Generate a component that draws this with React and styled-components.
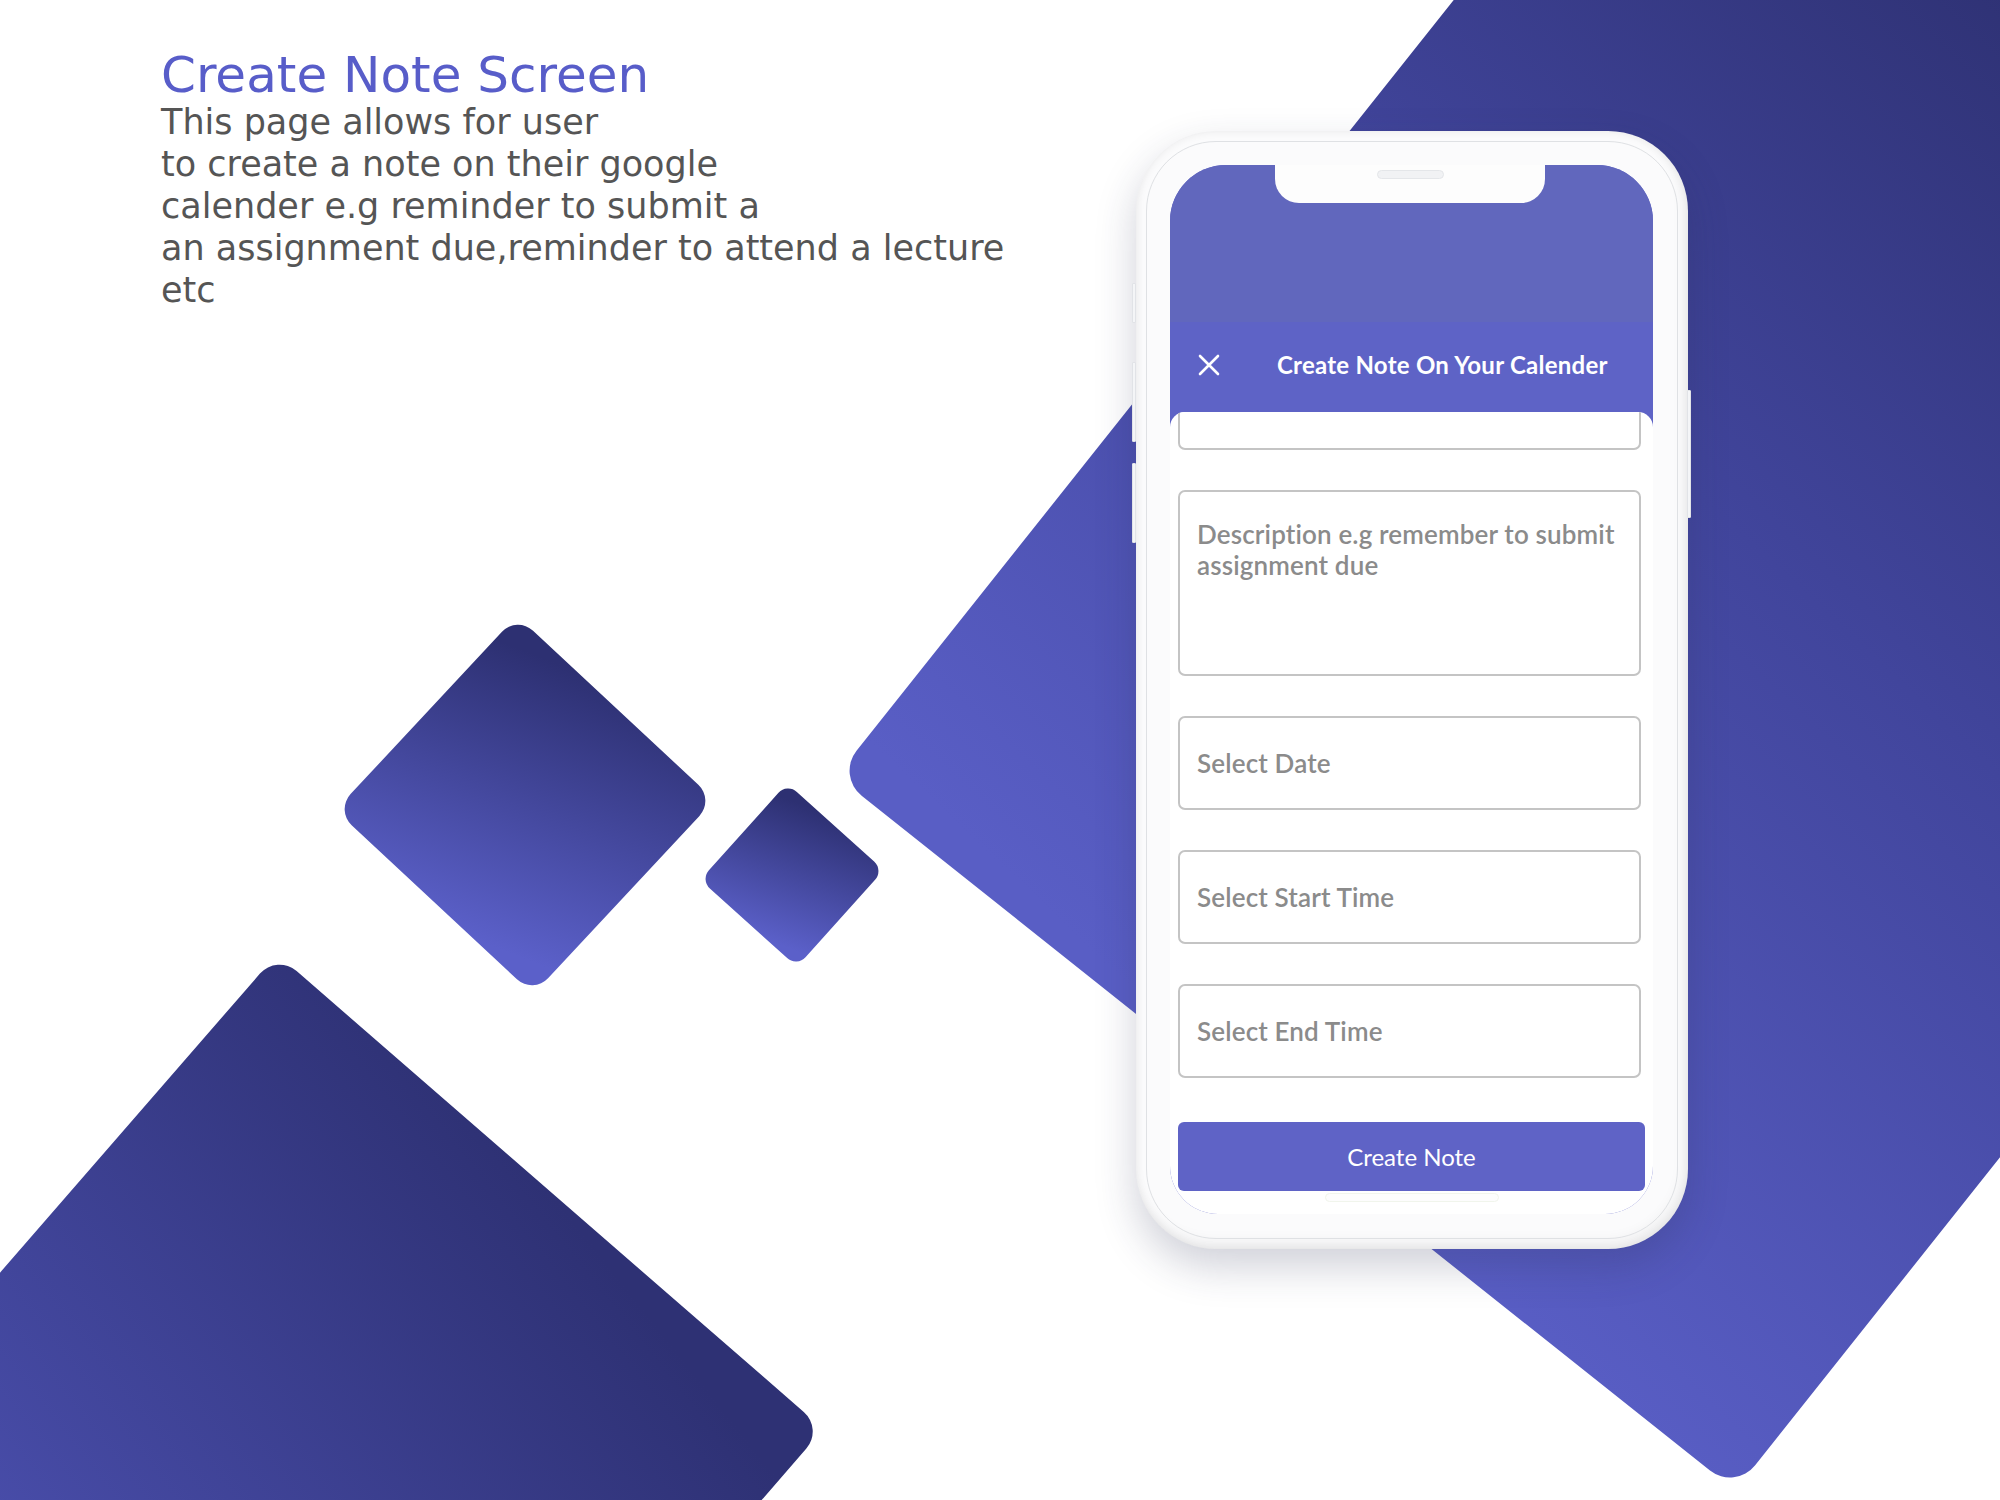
import React from "react";
import styled, { createGlobalStyle } from "styled-components";

const GlobalStyle = createGlobalStyle`
  html, body {
    margin: 0;
    padding: 0;
    background: #ffffff;
  }
  * {
    box-sizing: border-box;
  }
`;

const Page = styled.div`
  position: relative;
  width: 2000px;
  height: 1500px;
  overflow: hidden;
  background: #ffffff;
`;

const Backdrop = styled.svg`
  position: absolute;
  left: 0;
  top: 0;
  width: 2000px;
  height: 1500px;
  z-index: 0;
`;

const Stage = styled.div`
  position: relative;
  z-index: 1;
  display: flex;
  align-items: flex-start;
  padding: 52px 0 0 161px;
`;

const Intro = styled.div`
  flex: 0 0 975px;
  font-family: "DejaVu Sans", Verdana, sans-serif;
`;

const Heading = styled.h1`
  margin: 0;
  font-size: 50px;
  font-weight: 400;
  line-height: 46px;
  color: #585dc9;
`;

const Blurb = styled.p`
  margin: 3px 0 0 0;
  font-size: 35px;
  line-height: 42px;
  color: #555555;
  white-space: nowrap;
`;

const Phone = styled.div`
  position: relative;
  margin-top: 79px;
  width: 552px;
  height: 1118px;
  padding: 34px 35px 35px 34px;
  border-radius: 80px;
  background: #fbfbfc;
  box-shadow: 0 18px 40px rgba(40, 44, 80, 0.22),
    inset 0 0 10px rgba(0, 0, 0, 0.07),
    inset -4px -8px 14px rgba(0, 0, 0, 0.05);

  &::before {
    content: "";
    position: absolute;
    inset: 10px;
    border: 1px solid #dfe1e4;
    border-radius: 70px;
    pointer-events: none;
  }
`;

const SideKey = styled.span`
  position: absolute;
  top: ${(p) => p.$top}px;
  ${(p) => (p.$side === "left" ? "left: -4px;" : "right: -3px;")}
  width: 4px;
  height: ${(p) => p.$h}px;
  background: #f4f5f7;
  border: 1px solid #e1e3e7;
  border-radius: 1px;
`;

const Screen = styled.div`
  width: 483px;
  height: 1049px;
  border-radius: 56px 56px 48px 48px;
  overflow: hidden;
  background: #5e63c6;
  display: flex;
  flex-direction: column;
  font-family: Lato, "Liberation Sans", sans-serif;
`;

const StatusArea = styled.div`
  position: relative;
  height: 157px;
  background: #6167bd;
`;

const Notch = styled.div`
  position: absolute;
  top: 0;
  left: 105px;
  width: 270px;
  height: 38px;
  background: #fdfdfd;
  border-radius: 0 0 24px 24px;
  display: flex;
  justify-content: center;
  padding-top: 5px;
`;

const Speaker = styled.span`
  width: 67px;
  height: 9px;
  border-radius: 5px;
  background: #f1f2f4;
  border: 1px solid #e4e6e9;
`;

const TopBar = styled.div`
  height: 90px;
  display: flex;
  align-items: center;
  padding: 0 0 5px 28px;
  color: #ffffff;
`;

const CloseIcon = styled.svg`
  width: 22px;
  height: 22px;
  flex: 0 0 22px;
`;

const BarTitle = styled.span`
  margin-left: 57px;
  font-size: 24px;
  font-weight: 700;
  letter-spacing: 0.25px;
  white-space: nowrap;
`;

const Sheet = styled.div`
  flex: 1;
  background: #ffffff;
  border-radius: 15px 15px 0 0;
  overflow: hidden;
  padding: 0 8px 0 8px;
  display: flex;
  flex-direction: column;
  gap: 40px;
`;

const fieldText = `
  font-family: Lato, "Liberation Sans", sans-serif;
  font-size: 26px;
  font-weight: 600;
  letter-spacing: 0.15px;
  color: #5a5a5a;
  &::placeholder {
    color: #8b8b8b;
    opacity: 1;
  }
`;

const Field = styled.input`
  ${fieldText}
  display: block;
  width: 463px;
  height: 94px;
  flex: 0 0 94px;
  margin-top: ${(p) => p.$offset || 0}px;
  padding: 0 17px;
  border: 2px solid #c4c4c4;
  border-radius: 7px;
  background: #ffffff;
  outline: none;
`;

const NoteArea = styled.textarea`
  ${fieldText}
  display: block;
  width: 463px;
  height: 186px;
  flex: 0 0 186px;
  padding: 27px 17px 0 17px;
  line-height: 31px;
  border: 2px solid #c4c4c4;
  border-radius: 7px;
  background: #ffffff;
  outline: none;
  resize: none;
  overflow: hidden;
`;

const Footer = styled.div`
  margin-top: 4px;
  display: flex;
  flex-direction: column;
  align-items: center;
`;

const SubmitButton = styled.button`
  width: 467px;
  height: 69px;
  border: none;
  border-radius: 6px;
  background: #5f63c6;
  color: #ffffff;
  font-family: Lato, "Liberation Sans", sans-serif;
  font-size: 24px;
  font-weight: 400;
  cursor: pointer;
`;

const HomeBar = styled.span`
  margin-top: 2px;
  width: 174px;
  height: 9px;
  border-radius: 5px;
  background: #fdfdfd;
  border: 1px solid #f1f5ec;
`;

const Shapes = () => (
  <Backdrop viewBox="0 0 2000 1500">
    <defs>
      <linearGradient id="slab" x1="0.5" y1="1" x2="0.55" y2="0.15">
        <stop offset="0" stopColor="#595ec5" />
        <stop offset="0.55" stopColor="#41459c" />
        <stop offset="1" stopColor="#2e3173" />
      </linearGradient>
      <linearGradient id="tile" x1="0.3" y1="0" x2="0.7" y2="1">
        <stop offset="0" stopColor="#2d3072" />
        <stop offset="1" stopColor="#5b60c9" />
      </linearGradient>
      <linearGradient id="block" x1="0.5" y1="0" x2="0.35" y2="1">
        <stop offset="0" stopColor="#2e3174" />
        <stop offset="1" stopColor="#5358bf" />
      </linearGradient>
    </defs>
    <rect
      x="0"
      y="-1600"
      width="1148"
      height="1600"
      rx="32"
      fill="url(#slab)"
      transform="translate(836.6 775.8) rotate(38.5)"
    />
    <rect
      x="-135"
      y="-133"
      width="270"
      height="266"
      rx="22"
      fill="url(#tile)"
      transform="translate(525 805) rotate(43)"
    />
    <rect
      x="-65"
      y="-65"
      width="130"
      height="130"
      rx="13"
      fill="url(#tile)"
      transform="translate(792 875) rotate(42)"
    />
    <rect
      x="0"
      y="0"
      width="724"
      height="900"
      rx="26"
      fill="url(#block)"
      transform="translate(277 954) rotate(41)"
    />
  </Backdrop>
);

const App = () => {
  return (
    <Page>
      <GlobalStyle />
      <Shapes />
      <Stage>
        <Intro>
          <Heading>Create Note Screen</Heading>
          <Blurb>
            This page allows for user
            <br />
            to create a note on their google
            <br />
            calender e.g reminder to submit a
            <br />
            an assignment due,reminder to attend a lecture
            <br />
            etc
          </Blurb>
        </Intro>

        <Phone>
          <SideKey $side="left" $top={152} $h={40} />
          <SideKey $side="left" $top={231} $h={80} />
          <SideKey $side="left" $top={332} $h={80} />
          <SideKey $side="right" $top={259} $h={128} />
          <Screen>
            <StatusArea>
              <Notch>
                <Speaker />
              </Notch>
            </StatusArea>
            <TopBar>
              <CloseIcon viewBox="0 0 22 22">
                <path
                  d="M2 2 L20 20 M20 2 L2 20"
                  stroke="#ffffff"
                  strokeWidth="2.6"
                  strokeLinecap="round"
                  fill="none"
                />
              </CloseIcon>
              <BarTitle>Create Note On Your Calender</BarTitle>
            </TopBar>
            <Sheet>
              <Field $offset={-56} placeholder="" readOnly />
              <NoteArea
                placeholder={"Description e.g remember to submit\nassignment due"}
                readOnly
              />
              <Field placeholder="Select Date" readOnly />
              <Field placeholder="Select Start Time" readOnly />
              <Field placeholder="Select End Time" readOnly />
              <Footer>
                <SubmitButton type="button">Create Note</SubmitButton>
                <HomeBar />
              </Footer>
            </Sheet>
          </Screen>
        </Phone>
      </Stage>
    </Page>
  );
};

export default App;
